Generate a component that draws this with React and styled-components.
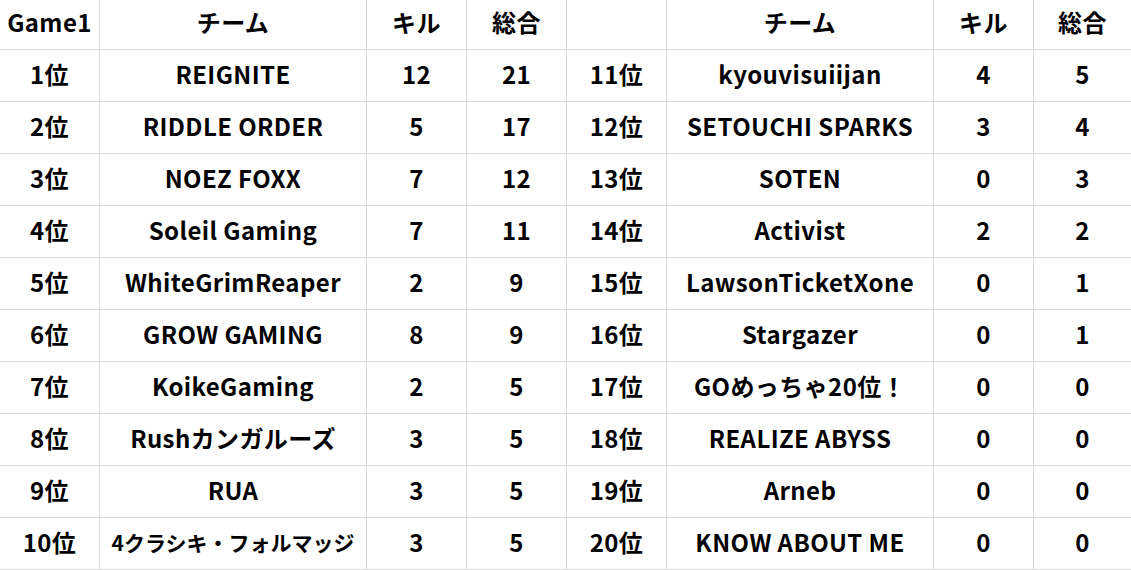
import React from "react";
import styled, { createGlobalStyle } from "styled-components";

const GlobalStyle = createGlobalStyle`
  html, body {
    margin: 0;
    padding: 0;
    background: #ffffff;
  }
  body {
    font-family: "Noto Sans CJK JP", "Noto Sans", sans-serif;
    color: #000000;
  }
`;

const Grid = styled.div`
  display: grid;
  grid-template-columns: 100px 267px 100px 100px 100px 267px 100px 97px;
  grid-template-rows: 50px repeat(10, 52px);
  width: 1131px;
`;

const Cell = styled.div`
  box-sizing: border-box;
  display: flex;
  align-items: center;
  justify-content: center;
  border-bottom: 1px solid #dadada;
  border-right: ${(p) => (p.$last ? "none" : "1px solid #dadada")};
  font-size: ${(p) => (p.$small ? "21px" : "24px")};
  letter-spacing: ${(p) => (p.$small ? "0" : "0.4px")};
  font-weight: 700;
  line-height: 1;
  white-space: nowrap;
  padding-bottom: ${(p) => (p.$head ? "6px" : "3px")};
`;

const rows = [
  ["1位", "REIGNITE", 12, 21, "11位", "kyouvisuiijan", 4, 5],
  ["2位", "RIDDLE ORDER", 5, 17, "12位", "SETOUCHI SPARKS", 3, 4],
  ["3位", "NOEZ FOXX", 7, 12, "13位", "SOTEN", 0, 3],
  ["4位", "Soleil Gaming", 7, 11, "14位", "Activist", 2, 2],
  ["5位", "WhiteGrimReaper", 2, 9, "15位", "LawsonTicketXone", 0, 1],
  ["6位", "GROW GAMING", 8, 9, "16位", "Stargazer", 0, 1],
  ["7位", "KoikeGaming", 2, 5, "17位", "GOめっちゃ20位！", 0, 0],
  ["8位", "Rushカンガルーズ", 3, 5, "18位", "REALIZE ABYSS", 0, 0],
  ["9位", "RUA", 3, 5, "19位", "Arneb", 0, 0],
  ["10位", "4クラシキ・フォルマッジ", 3, 5, "20位", "KNOW ABOUT ME", 0, 0],
];

const header = ["Game1", "チーム", "キル", "総合", "", "チーム", "キル", "総合"];

export default function App() {
  return (
    <>
      <GlobalStyle />
      <Grid>
        {header.map((h, i) => (
          <Cell key={"h" + i} $head $last={i === 7}>
            {h}
          </Cell>
        ))}
        {rows.map((r, ri) =>
          r.map((v, ci) => (
            <Cell
              key={ri + "-" + ci}
              $last={ci === 7}
              $small={ri === 9 && ci === 1}
            >
              {v}
            </Cell>
          ))
        )}
      </Grid>
    </>
  );
}
